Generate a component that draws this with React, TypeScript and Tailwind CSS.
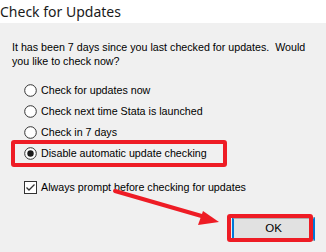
import React from "react";

function Radio({ checked }: { checked?: boolean }) {
  return (
    <svg width="13" height="13" viewBox="0 0 13 13" className="shrink-0">
      <circle cx="6.5" cy="6.5" r="5.8" fill="#ffffff" stroke="#333333" strokeWidth="1" />
      {checked && <circle cx="6.5" cy="6.5" r="3.2" fill="#1a1a1a" />}
    </svg>
  );
}

function Check() {
  return (
    <svg width="13" height="13" viewBox="0 0 13 13" className="shrink-0">
      <rect x="0.5" y="0.5" width="12" height="12" fill="#ffffff" stroke="#333333" strokeWidth="1" />
      <path d="M2.5 6.5 L5 9 L10.5 3.5" fill="none" stroke="#333333" strokeWidth="1.3" />
    </svg>
  );
}

export default function App() {
  const options = [
    "Check for updates now",
    "Check next time Stata is launched",
    "Check in 7 days",
    "Disable automatic update checking",
  ];
  return (
    <div
      className="relative w-[326px] h-[252px] overflow-hidden bg-[#f0f0f0] text-black"
      style={{ fontFamily: '"Liberation Sans", Arial, sans-serif' }}
    >
      <div className="h-[23px] bg-white flex items-center">
        <span
          className="text-[14px] text-[#1a1a1a] leading-none"
          style={{ fontFamily: '"Noto Sans", sans-serif' }}
        >
          Check for Updates
        </span>
      </div>
      <div className="pl-[12px] pt-[17px] text-[10.7px] leading-[14px]">
        <p>It has been 7 days since you last checked for updates.&nbsp; Would</p>
        <p>you like to check now?</p>
      </div>
      <div className="pl-[24px] pt-[12.6px] flex flex-col text-[10.7px] leading-[13px]">
        {options.map((o, i) => (
          <div key={o} className="h-[20.7px] flex items-center gap-[4px]">
            <Radio checked={i === 3} />
            <span>{o}</span>
          </div>
        ))}
      </div>
      <div className="pl-[24px] pt-[17.5px] flex items-center gap-[4px] text-[10.7px] leading-[13px]">
        <Check />
        <span>Always prompt before checking for updates</span>
      </div>
      <div className="flex justify-end pr-[11px] pt-[23px]">
        <button className="w-[83px] h-[24px] bg-[#e1e1e1] border-x-2 border-x-[#0078d7] border-y-2 border-y-[#adadad] text-[11.5px] leading-none">
          OK
        </button>
      </div>

      {/* annotations */}
      <div className="absolute left-[11px] top-[140px] w-[216px] h-[27px] border-[4px] border-[#ee1c25] rounded-[3px]" />
      <div className="absolute left-[227px] top-[214px] w-[86px] h-[28px] border-[4px] border-[#ee1c25] rounded-[3px]" />
      <svg className="absolute left-0 top-0" width="326" height="252" viewBox="0 0 326 252">
        <line x1="115" y1="191" x2="205" y2="217" stroke="#ee1c25" strokeWidth="4" strokeLinecap="round" />
        <polygon points="219,222 203,211 198,225" fill="#ee1c25" />
      </svg>
    </div>
  );
}
